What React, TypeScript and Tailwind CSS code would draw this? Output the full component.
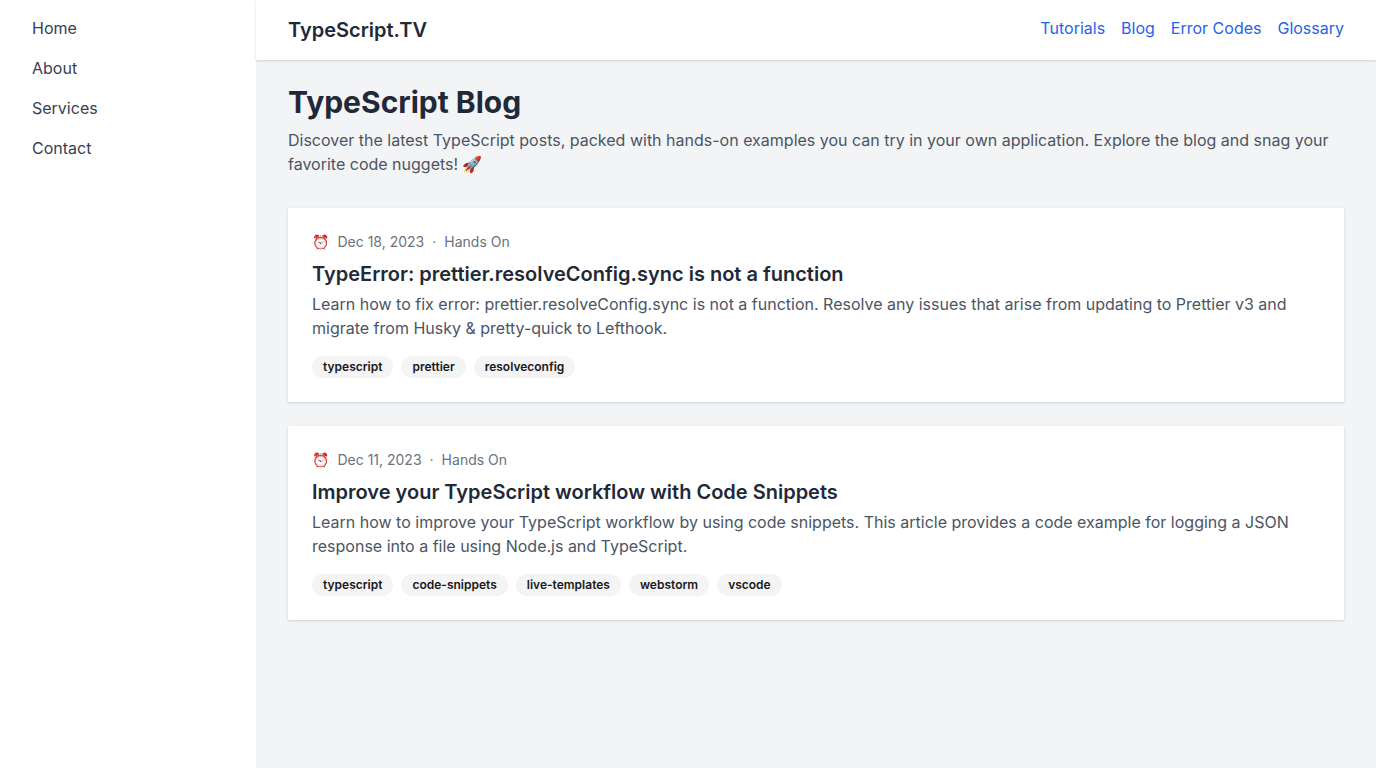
const sideLinks = ["Home", "About", "Services", "Contact"];
const topLinks = ["Tutorials", "Blog", "Error Codes", "Glossary"];

type Post = { date: string; category: string; title: string; text: string; tags: string[] };

const posts: Post[] = [
  {
    date: "Dec 18, 2023",
    category: "Hands On",
    title: "TypeError: prettier.resolveConfig.sync is not a function",
    text: "Learn how to fix error: prettier.resolveConfig.sync is not a function. Resolve any issues that arise from updating to Prettier v3 and migrate from Husky & pretty-quick to Lefthook.",
    tags: ["typescript", "prettier", "resolveconfig"],
  },
  {
    date: "Dec 11, 2023",
    category: "Hands On",
    title: "Improve your TypeScript workflow with Code Snippets",
    text: "Learn how to improve your TypeScript workflow by using code snippets. This article provides a code example for logging a JSON response into a file using Node.js and TypeScript.",
    tags: ["typescript", "code-snippets", "live-templates", "webstorm", "vscode"],
  },
];

function PostCard({ post }: { post: Post }) {
  return (
    <article className="bg-white p-6 shadow-[0_1px_2px_rgba(0,0,0,0.06),0_1px_3px_rgba(0,0,0,0.1)]">
      <div className="mb-2 flex items-center text-sm text-[#6b7280]">
        <span className="mr-2">⏰</span>
        <time>{post.date}</time>
        <span className="mx-2">·</span>
        <span>{post.category}</span>
      </div>
      <h2 className="mb-1 text-xl leading-7 font-semibold text-[#1f2937]">{post.title}</h2>
      <p className="text-base text-[#4b5563]">{post.text}</p>
      <div className="mt-4 flex flex-wrap gap-2">
        {post.tags.map((tag) => (
          <span
            key={tag}
            className="rounded-full border border-transparent bg-[#f4f4f5] px-2.5 py-0.5 text-xs font-semibold text-[#18181b]"
          >
            {tag}
          </span>
        ))}
      </div>
    </article>
  );
}

export default function App() {
  return (
    <div className="flex min-h-screen bg-[#f3f4f6] font-['Inter','Noto_Color_Emoji',sans-serif]">
      <aside className="w-64 shrink-0 bg-white px-8 py-4">
        <nav className="flex flex-col gap-4">
          {sideLinks.map((label) => (
            <a key={label} href="#" className="text-[#374151]">
              {label}
            </a>
          ))}
        </nav>
      </aside>
      <div className="min-w-0 flex-1">
        <header className="flex justify-between bg-white px-8 py-4 shadow-[0_1px_3px_rgba(0,0,0,0.1),0_1px_2px_rgba(0,0,0,0.06)]">
          <div className="text-xl leading-7 font-semibold text-[#1f2937]">TypeScript.TV</div>
          <nav className="flex gap-4">
            {topLinks.map((label) => (
              <a key={label} href="#" className="text-[#2563eb]">
                {label}
              </a>
            ))}
          </nav>
        </header>
        <main className="px-8 py-6">
          <h1 className="mb-2 text-3xl leading-9 font-bold text-[#1f2937]">TypeScript Blog</h1>
          <p className="mb-8 text-[#4b5563]">
            Discover the latest TypeScript posts, packed with hands-on examples you can try in your own application.
            Explore the blog and snag your favorite code nuggets! 🚀
          </p>
          <div className="flex flex-col gap-6">
            {posts.map((post) => (
              <PostCard key={post.title} post={post} />
            ))}
          </div>
        </main>
      </div>
    </div>
  );
}
